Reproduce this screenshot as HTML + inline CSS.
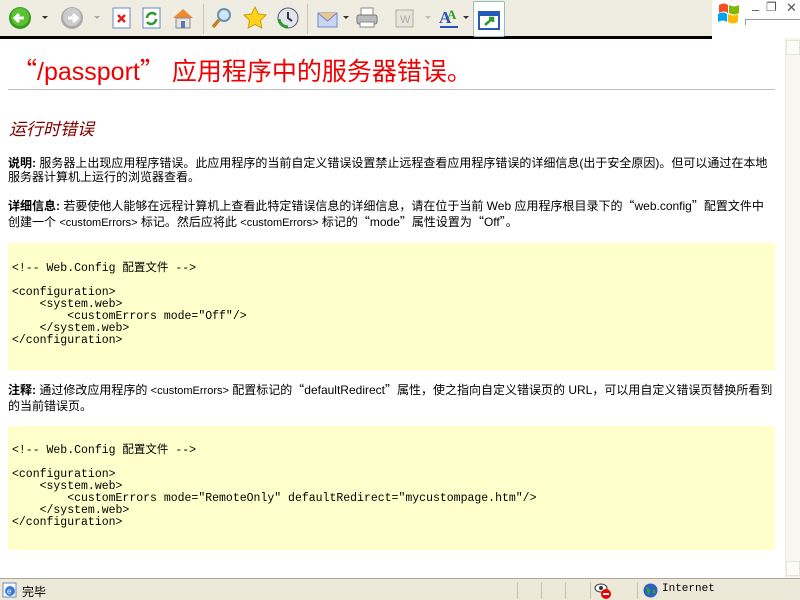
<!DOCTYPE html>
<html><head><meta charset="utf-8">
<style>
*{margin:0;padding:0;box-sizing:border-box}
body{width:800px;height:600px;overflow:hidden;background:#fff;position:relative;font-family:"Liberation Sans","Noto Sans CJK SC",sans-serif;font-size:12px;color:#000}
.a{position:absolute;white-space:nowrap}
.q{font-family:"Noto Sans CJK SC",sans-serif}
#tb{position:absolute;left:0;top:0;width:712px;height:38px;background:#efede2;border-bottom:2px solid #000}
#tr{position:absolute;left:712px;top:0;width:88px;height:38px;background:#fff}
.ic{position:absolute;top:6px;width:24px;height:24px}
.sep{position:absolute;top:4px;width:1px;height:30px;background:#c8c5b5}
.dd{position:absolute;top:16px;width:0;height:0;border-left:3px solid transparent;border-right:3px solid transparent;border-top:3px solid #333}
.box{position:absolute;left:8px;width:767px;background:#ffffcc}
pre{font-family:"Liberation Mono","Noto Sans CJK SC",monospace;font-size:11.5px;line-height:12px;position:absolute;left:12px}
#sb{position:absolute;left:0;top:578px;width:800px;height:22px;background:#ece9d8;border-top:1px solid #aca899}
.sd{position:absolute;top:3px;width:1px;height:17px;background:#c5c2b2}
#scr{position:absolute;left:785px;top:38px;width:15px;height:540px;background:#f7f6f1;border-left:1px solid #eeede5}
</style></head><body>
<div id="tb">
<svg class="ic" style="left:8px" viewBox="0 0 24 24"><circle cx="12" cy="12" r="11" fill="#3a9a1f"/><circle cx="12" cy="11" r="9" fill="#5bc232"/><path d="M16 12H8M11 8l-4 4 4 4" stroke="#fff" stroke-width="3" fill="none"/></svg>
<div class="dd" style="left:42px"></div>
<svg class="ic" style="left:60px" viewBox="0 0 24 24"><circle cx="12" cy="12" r="11" fill="#aaa"/><circle cx="12" cy="11" r="9" fill="#ccc"/><path d="M8 12h8M13 8l4 4-4 4" stroke="#fff" stroke-width="3" fill="none"/></svg>
<div class="dd" style="left:94px;border-top-color:#aaa"></div>
<svg class="ic" style="left:110px" viewBox="0 0 24 24"><rect x="3" y="2" width="17" height="20" fill="#fff" stroke="#6b86c4"/><path d="M8 9l7 7M15 9l-7 7" stroke="#d22" stroke-width="2.5"/></svg>
<svg class="ic" style="left:140px" viewBox="0 0 24 24"><rect x="3" y="2" width="17" height="20" fill="#fff" stroke="#6b86c4"/><path d="M7 12a5 5 0 0 1 9-3M16 13a5 5 0 0 1-9 3" stroke="#2a9a2a" stroke-width="2.5" fill="none"/></svg>
<svg class="ic" style="left:171px" viewBox="0 0 24 24"><path d="M2 12L12 3l10 9z" fill="#f08a30"/><rect x="5" y="12" width="14" height="10" fill="#e8e4d8" stroke="#889"/><rect x="10" y="15" width="4" height="7" fill="#5878b8"/></svg>
<div class="sep" style="left:203px"></div>
<svg class="ic" style="left:210px" viewBox="0 0 24 24"><circle cx="14" cy="9" r="6" fill="#cfe6f7" stroke="#6a8fb5" stroke-width="2"/><path d="M9 14l-6 7" stroke="#c08020" stroke-width="3.5"/></svg>
<svg class="ic" style="left:243px" viewBox="0 0 24 24"><path d="M12 1l3.4 7 7.6 1-5.5 5.3 1.3 7.7L12 18.3 5.2 22l1.3-7.7L1 9l7.6-1z" fill="#ffd21e" stroke="#c9a000"/></svg>
<svg class="ic" style="left:276px" viewBox="0 0 24 24"><circle cx="12" cy="12" r="10" fill="#dfe6ee" stroke="#557"/><path d="M12 6v6l4 3" stroke="#333" stroke-width="2" fill="none"/><path d="M3 13a9 9 0 0 0 9 8" stroke="#2a9a2a" stroke-width="3" fill="none"/></svg>
<div class="sep" style="left:307px"></div>
<svg class="ic" style="left:316px" viewBox="0 0 24 24"><rect x="2" y="7" width="19" height="14" fill="#c9d5f4" stroke="#7386c8"/><path d="M2 7l9.5 8L21 7" stroke="#7386c8" fill="#e9c88a"/></svg>
<div class="dd" style="left:343px"></div>
<svg class="ic" style="left:355px" viewBox="0 0 24 24"><rect x="6" y="2" width="12" height="8" fill="#fff" stroke="#888"/><rect x="2" y="9" width="20" height="9" rx="2" fill="#bbb" stroke="#777"/><rect x="5" y="16" width="14" height="5" fill="#fff" stroke="#888"/></svg>
<svg class="ic" style="left:393px" viewBox="0 0 24 24"><rect x="3" y="4" width="17" height="17" fill="#e8e6dc" stroke="#b0aea0"/><text x="7" y="17" font-size="11" fill="#aaa" font-family="Liberation Sans">W</text></svg>
<div class="dd" style="left:425px;border-top-color:#bbb"></div>
<svg class="ic" style="left:438px" viewBox="0 0 24 24"><text x="1" y="17" font-size="17" font-weight="bold" fill="#2850c0" font-family="Liberation Serif">A</text><text x="9" y="13" font-size="13" font-weight="bold" fill="#2a9a2a" font-family="Liberation Serif">A</text><path d="M2 21h18" stroke="#2850c0" stroke-width="2"/></svg>
<div class="dd" style="left:463px"></div>
<div style="position:absolute;left:473px;top:1px;width:32px;height:36px;background:#fff;border:1px solid #9bb;border-radius:2px"></div>
<svg class="ic" style="left:477px;top:8px" viewBox="0 0 24 24"><rect x="2" y="4" width="20" height="17" fill="#fff" stroke="#2858b8" stroke-width="2"/><rect x="2" y="4" width="20" height="4" fill="#2858b8"/><path d="M8 17l8-7M12 10h4v4" stroke="#2a9a2a" stroke-width="2.5" fill="none"/></svg>
</div>
<div id="tr">
<svg style="position:absolute;left:5px;top:1px" width="24" height="24" viewBox="0 0 24 24"><path d="M2 4q5-3 9 0v8q-4-3-9 0z" fill="#f25022"/><path d="M12 4q5 3 10 0v8q-5 3-10 0z" fill="#7fba00"/><path d="M1 13q5-3 9 0v8q-4-3-9 0z" fill="#00a4ef"/><path d="M11 13q5 3 10 0v8q-5 3-10 0z" fill="#ffb900"/></svg>
<div class="a" style="left:40px;top:2px;color:#555;font-size:13px">–</div>
<div class="a" style="left:54px;top:0px;color:#555;font-size:12px">❐</div>
<div class="a" style="left:74px;top:0px;color:#555;font-size:13px">✕</div>
<div style="position:absolute;left:33px;top:19px;width:55px;height:1px;background:#999"></div>
<div style="position:absolute;left:33px;top:19px;width:1px;height:6px;background:#999"></div>
</div>
<div style="position:absolute;left:0;top:38px;width:712px;height:1px;background:#000"></div>
<div id="scr"><div style="position:absolute;left:0;top:2px;width:14px;height:15px;border:1px solid #e5e3da;background:#fbfbf8"></div><div style="position:absolute;left:0;bottom:2px;width:14px;height:15px;border:1px solid #e5e3da;background:#fbfbf8"></div></div>

<div class="a" style="left:12px;top:52px;font-size:25px;color:#e00"><span class="q">“</span>/passport<span class="q">”</span> 应用程序中的服务器错误。</div>
<div style="position:absolute;left:8px;top:89px;width:767px;height:1px;background:#c0c0c0"></div>
<div class="a" style="left:9px;top:115px;font-size:17px;font-style:italic;color:#800000">运行时错误</div>

<div class="a" style="left:8px;top:156px;line-height:14px"><b>说明:</b> 服务器上出现应用程序错误。此应用程序的当前自定义错误设置禁止远程查看应用程序错误的详细信息(出于安全原因)。但可以通过在本地<br>服务器计算机上运行的浏览器查看。</div>
<div class="a" style="left:8px;top:198px;line-height:15px"><b>详细信息:</b> 若要使他人能够在远程计算机上查看此特定错误信息的详细信息，请在位于当前 Web 应用程序根目录下的<span class="q">“</span>web.config<span class="q">”</span>配置文件中<br>创建一个 <span style="font-size:11px">&lt;customErrors&gt;</span> 标记。然后应将此 <span style="font-size:11px">&lt;customErrors&gt;</span> 标记的<span class="q">“</span>mode<span class="q">”</span>属性设置为<span class="q">“</span>Off<span class="q">”</span>。</div>

<div class="box" style="top:243px;height:127px"></div>
<pre style="top:263px">&lt;!-- Web.Config 配置文件 --&gt;

&lt;configuration&gt;
    &lt;system.web&gt;
        &lt;customErrors mode="Off"/&gt;
    &lt;/system.web&gt;
&lt;/configuration&gt;</pre>

<div class="a" style="left:8px;top:382px;line-height:15px"><b>注释:</b> 通过修改应用程序的 <span style="font-size:11px">&lt;customErrors&gt;</span> 配置标记的<span class="q">“</span>defaultRedirect<span class="q">”</span>属性，使之指向自定义错误页的 URL，可以用自定义错误页替换所看到<br>的当前错误页。</div>

<div class="box" style="top:426px;height:124px"></div>
<pre style="top:445px">&lt;!-- Web.Config 配置文件 --&gt;

&lt;configuration&gt;
    &lt;system.web&gt;
        &lt;customErrors mode="RemoteOnly" defaultRedirect="mycustompage.htm"/&gt;
    &lt;/system.web&gt;
&lt;/configuration&gt;</pre>

<div id="sb">
<svg style="position:absolute;left:2px;top:3px" width="16" height="16" viewBox="0 0 16 16"><rect x="1" y="1" width="13" height="14" fill="#fff" stroke="#6b86c4"/><circle cx="8" cy="9" r="5" fill="#3a7ad8"/><text x="5" y="12" font-size="8" fill="#fff" font-family="Liberation Sans">e</text></svg>
<div class="a" style="left:22px;top:4px">完毕</div>
<div class="sd" style="left:517px"></div><div class="sd" style="left:541px"></div><div class="sd" style="left:565px"></div><div class="sd" style="left:590px"></div><div class="sd" style="left:637px"></div>
<svg style="position:absolute;left:594px;top:3px" width="18" height="18" viewBox="0 0 18 18"><ellipse cx="7" cy="6" rx="6" ry="4" fill="#fff" stroke="#333"/><circle cx="7" cy="6" r="2" fill="#333"/><circle cx="12" cy="12" r="5" fill="#e00"/><rect x="9" y="11" width="6" height="2" fill="#fff"/></svg>
<svg style="position:absolute;left:643px;top:4px" width="15" height="15" viewBox="0 0 15 15"><circle cx="7.5" cy="7.5" r="7" fill="#2a5fc8"/><path d="M3 4q3 0 4 3t-2 5M9 2q3 3 1 6t3 2" fill="#3aa030"/></svg>
<div class="a" style="left:662px;top:4px;font-family:'Liberation Mono',monospace;font-size:11px">Internet</div>
</div>
</body></html>
